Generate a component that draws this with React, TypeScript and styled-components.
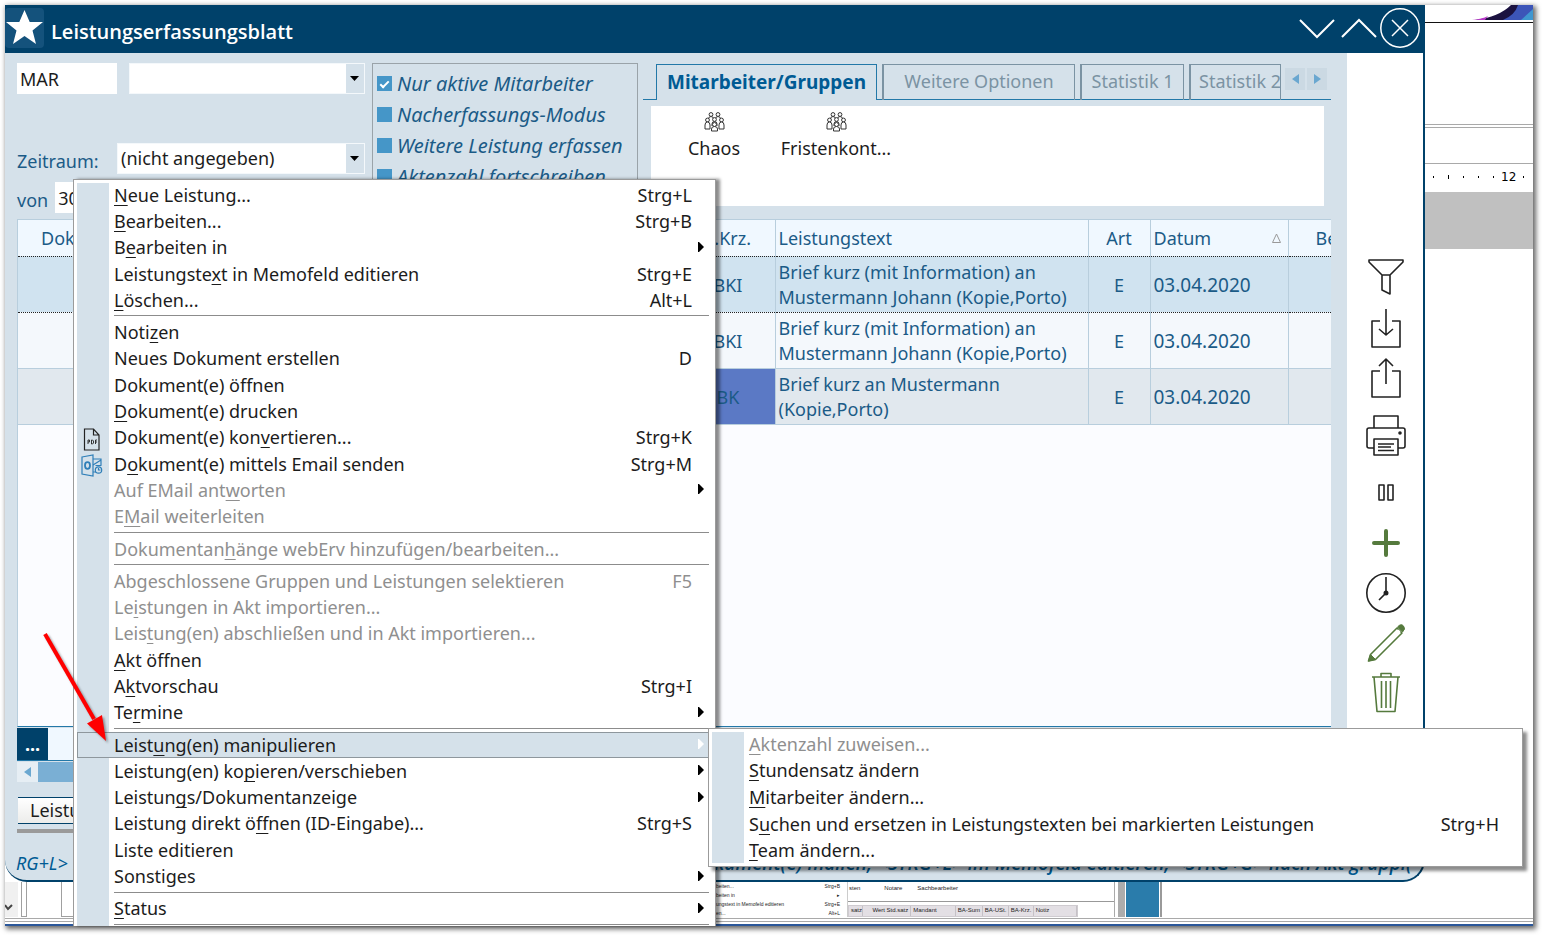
import React from "react";
import styled, { createGlobalStyle, css } from "styled-components";

const color = {
  navy: "#00416a",
  tile: "#14527c",
  panel: "#d5e1ea",
  text: "#1b5b87",
  strong: "#005b94",
  line: "#b8cedd",
  tabLine: "#2378a8",
  mutedTab: "#7b93a3",
  box: "#4596c8",
  ink: "#1c1c1c",
  disabled: "#8f8f8f",
  green: "#557a3d",
};

const Global = createGlobalStyle`
  *, *::before, *::after { box-sizing: border-box; }
  body {
    margin: 0;
    background: #fff;
    font-family: "Noto Sans", "Open Sans", sans-serif;
    font-size: 18px;
    line-height: 25px;
    color: ${color.text};
    overflow: hidden;
  }
  button, input, select { font: inherit; color: inherit; margin: 0; padding: 0; border: 0; background: none; border-radius: 0; }
`;

const Desktop = styled.div`
  position: relative;
  display: flex;
  flex-direction: column;
  margin: 5px 9px 9px 5px;
  min-height: calc(100vh - 14px);
  background: #fff;
  border-bottom: 2px solid #2b579a;
  box-shadow: 2px 2px 5px 1px rgba(0, 0, 0, 0.6);
`;

const Upper = styled.div`
  flex: 1;
  display: flex;
`;

/* ---------- application window ---------- */

const AppWindow = styled.section`
  flex: 1;
  min-width: 0;
  display: flex;
  flex-direction: column;
  background: ${color.panel};
  border-right: 2px solid ${color.navy};
  border-bottom: 2px solid ${color.navy};
  border-radius: 0 0 22px 22px;
  overflow: hidden;
`;

const TitleBar = styled.header`
  display: flex;
  align-items: center;
  height: 48px;
  padding-right: 2px;
  background: ${color.navy};
  color: #fff;
`;

const AppIcon = styled.div`
  width: 39px;
  height: 40px;
  margin-bottom: 2px;
  border-radius: 4px;
  background: ${color.tile};
`;

const Title = styled.h1`
  flex: 1;
  margin: 6px 0 0 7px;
  font-family: "Open Sans", sans-serif;
  font-size: 20px;
  line-height: 26px;
  font-weight: 600;
`;

const WindowButton = styled.button`
  display: flex;
  width: 42px;
  height: 42px;
  margin-bottom: 2px;
`;

const WindowBody = styled.div`
  flex: 1;
  display: flex;
  min-height: 0;
`;

const Main = styled.main`
  flex: 1;
  min-width: 0;
  display: flex;
  flex-direction: column;
  padding: 10px 16px 11px 12px;
`;

const FilterArea = styled.div`
  display: flex;
  height: 150px;
  margin-bottom: 6px;
`;

const Form = styled.form`
  display: flex;
  flex-direction: column;
  width: 348px;
  margin-right: 7px;
`;

const FormRow = styled.div<{ $before?: number; $gap?: number }>`
  display: flex;
  align-items: center;
  gap: ${(p) => p.$gap ?? 12}px;
  margin-top: ${(p) => p.$before ?? 0}px;
`;

const Label = styled.label<{ $width?: number }>`
  width: ${(p) => (p.$width ? `${p.$width}px` : "auto")};
  padding-top: 6px;
`;

const TextBox = styled.input`
  width: 100px;
  height: 31px;
  padding: 0 3px;
  background: #fff;
  color: ${color.ink};
`;

const SelectBox = styled.div`
  flex: 1;
  display: grid;
  grid-template-columns: 1fr 20px;
  height: 31px;
  border: 1px solid #f4f8fb;
  background: linear-gradient(${color.panel}, ${color.panel}) right / 18px 100% no-repeat #fff;

  select {
    grid-area: 1 / 1 / 2 / 3;
    appearance: none;
    padding: 0 3px;
    color: ${color.ink};
    outline: none;
  }
  svg {
    grid-area: 1 / 2;
    align-self: center;
    justify-self: center;
    pointer-events: none;
  }
`;

const Options = styled.fieldset`
  width: 266px;
  min-width: 0;
  margin: 0 5px 0 0;
  padding: 4px;
  border: 1px solid #9aa3a9;
  font-size: 20px;
  font-style: italic;
`;

const Option = styled.label`
  display: flex;
  align-items: center;
  gap: 5px;
  height: 31px;
  white-space: nowrap;
`;

const Check = styled.input`
  appearance: none;
  width: 15px;
  height: 15px;
  background: ${color.box};

  &:checked {
    display: grid;
    place-items: center;
  }
  &:checked::before {
    content: "";
    width: 9px;
    height: 5px;
    border: solid #fff;
    border-width: 0 0 2px 2px;
    transform: rotate(-45deg);
  }
`;

const TabArea = styled.div`
  flex: 1;
  min-width: 0;
`;

const TabStrip = styled.div`
  display: flex;
  height: 37px;
  padding-top: 1px;
  background: linear-gradient(${color.tabLine}, ${color.tabLine}) bottom / 100% 1px no-repeat;
`;

const Tab = styled.button<{ $active?: boolean; $cut?: boolean }>`
  flex: none;
  width: 104px;
  padding: 0 8px 2px;
  margin-right: 5px;
  white-space: nowrap;
  border: 2px solid ${color.mutedTab};
  border-bottom: 0;
  border-width: 1px 1px 0 2px;
  color: ${color.mutedTab};
  background: linear-gradient(${color.tabLine}, ${color.tabLine}) bottom / 100% 1px no-repeat ${color.panel};

  ${(p) =>
    p.$active &&
    css`
      width: 221px;
      margin-left: 13px;
      padding-bottom: 0;
      border: 1px solid ${color.tabLine};
      border-bottom: 0;
      background: ${color.panel};
      color: ${color.strong};
      font-size: 19px;
      font-weight: 700;
    `}
  ${(p) =>
    p.$cut &&
    css`
      width: 92px;
      margin-right: 4px;
      padding-right: 0;
      text-align: left;
      overflow: hidden;
    `}
`;

const WideTab = styled(Tab)`
  width: 193px;
`;

const ScrollTab = styled.button`
  display: flex;
  align-items: center;
  justify-content: center;
  width: 20px;
  height: 22px;
  margin: 4px 2px 0 0;
  background: #cbd9e3;
`;

const GroupPanel = styled.div`
  display: flex;
  gap: 2px;
  height: 100px;
  margin: 6px 7px 0 8px;
  padding: 6px 3px;
  background: #fff;
`;

const GroupTile = styled.button`
  display: flex;
  flex-direction: column;
  align-items: center;
  gap: 4px;
  width: 120px;
  color: ${color.ink};
`;

/* ---------- table ---------- */

const GridArea = styled.div`
  flex: 1;
  overflow: hidden;
  border: 1px solid ${color.line};
  border-right: 0;
  border-bottom: 1px solid ${color.tabLine};
  background: #fbfcff;
`;

const DataTable = styled.table`
  width: 100%;
  table-layout: fixed;
  border-collapse: collapse;
`;

const Th = styled.th<{ $align?: string; $indent?: number }>`
  height: 36px;
  padding: 1px 3px 0 ${(p) => p.$indent ?? 3}px;
  font-weight: 400;
  text-align: ${(p) => p.$align ?? "left"};
  white-space: nowrap;
  overflow: hidden;
  background: #f0f8ff;
  border-right: 1px solid ${color.line};

  &:last-child { border-right: 0; }
`;

const SortHead = styled.span`
  display: flex;
  align-items: center;
  justify-content: space-between;
  padding-right: 4px;
`;

const Td = styled.td<{ $align?: string; $marked?: boolean; $digits?: boolean }>`
  height: 56px;
  padding: 2px 3px 0;
  font-size: ${(p) => (p.$digits ? 19 : 18)}px;
  text-align: ${(p) => p.$align ?? "left"};
  border-right: 1px solid ${color.line};
  ${(p) => p.$marked && css`background: #5b79c5;`}

  &:last-child { border-right: 0; }
`;

const rowTone = { selected: "#d0e3f0", light: "#f4f8fc", dark: "#e1e8ee" };

const Tr = styled.tr<{ $tone: keyof typeof rowTone }>`
  background: ${(p) => rowTone[p.$tone]};
  border-bottom: 1px solid ${color.line};
  ${(p) =>
    p.$tone === "selected" &&
    css`
      border-top: 1px dotted #222;
      border-bottom: 1px dotted #222;
    `}
`;

const SumRow = styled.div`
  display: flex;
  height: 33px;
  margin: 1px 0;
  background: #f0f8ff;
  border-bottom: 1px solid ${color.tabLine};
`;

const MoreButton = styled.button`
  width: 31px;
  background: ${color.navy};
  color: #fff;
  font-weight: 700;
`;

const ScrollTrack = styled.div`
  display: flex;
  height: 20px;
  background: #e6eef4;
`;

const ScrollArrow = styled.button`
  display: flex;
  align-items: center;
  justify-content: center;
  width: 21px;
`;

const ScrollThumb = styled.div`
  width: 70%;
  background: #7aafd4;
`;

const ListButton = styled.button`
  align-self: flex-start;
  width: 160px;
  height: 27px;
  margin: 15px 0 5px 1px;
  padding-left: 12px;
  text-align: left;
  color: ${color.ink};
  background: linear-gradient(#fff, #ececea);
  border: solid ${color.navy};
  border-width: 1px 0;
`;

const Divider = styled.div`
  height: 4px;
  background: #9a9a9a;
`;

const HintLine = styled.footer`
  display: flex;
  justify-content: space-between;
  height: 36px;
  padding: 7px 11px 0;
  font-style: italic;
  color: ${color.strong};
  white-space: nowrap;
`;

const Hint = styled.span<{ $strong?: boolean }>`
  ${(p) =>
    p.$strong &&
    css`
      font-family: "Open Sans", sans-serif;
      font-size: 19px;
      font-weight: 600;
    `}
`;

/* ---------- tool bar at the right ---------- */

const ToolBar = styled.aside`
  display: flex;
  flex-direction: column;
  gap: 17px;
  width: 76px;
  padding: 205px 17px 0 19px;
  background: #fff;
`;

const ToolGroup = styled.div`
  display: flex;
  flex-direction: column;
  gap: 10px;
`;

const ToolButton = styled.button`
  display: flex;
  width: 40px;
  height: 40px;

  svg { overflow: visible; }
`;

/* ---------- document window behind, right ---------- */

const DocColumn = styled.div`
  display: flex;
  flex-direction: column;
  width: 108px;
`;

const DocPicture = styled.div`
  height: 18px;
  border-bottom: 1px solid #111;
  svg { display: block; margin-left: auto; }
`;

const DocBlock = styled.div<{ $height: number; $line?: boolean; $fill?: string }>`
  height: ${(p) => p.$height}px;
  background: ${(p) => p.$fill ?? "#fff"};
  border-bottom: ${(p) => (p.$line ? "1px solid #a9a9a9" : "0")};
`;

const Ruler = styled.div`
  display: flex;
  align-items: center;
  gap: 14px;
  height: 28px;
  padding: 0 8px 3px;
  font-family: "DejaVu Sans", sans-serif;
  font-size: 12px;
  line-height: 14px;
  color: #000;
`;

const Tick = styled.i<{ $tall?: boolean }>`
  width: 1px;
  height: ${(p) => (p.$tall ? 4 : 2)}px;
  background: #000;
`;

const RulerNumber = styled.span`
  margin: 0 -7px;
`;

/* ---------- strip of windows behind, bottom ---------- */

const LowerStrip = styled.div`
  display: flex;
  height: 42px;
  padding-bottom: 7px;
  overflow: hidden;
  font-family: "Liberation Sans", sans-serif;
  font-size: 6px;
  line-height: 9px;
  color: #222;
  background: linear-gradient(#a9a9a9, #a9a9a9) 0 36px / 100% 1px no-repeat,
    linear-gradient(#a9a9a9, #a9a9a9) 0 39px / 100% 1px no-repeat;
`;

const StripCorner = styled.div`
  display: flex;
  width: 711px;
`;

const StripScroll = styled.div`
  display: flex;
  align-items: flex-end;
  width: 13px;
  background: #f0f0f0;
  padding-bottom: 6px;
`;

const StripPage = styled.div<{ $width: number; $before: number }>`
  width: ${(p) => p.$width}px;
  margin-left: ${(p) => p.$before}px;
  border: solid #a0a0a0;
  border-width: 0 1px 1px 1px;
`;

const MiniMenu = styled.div`
  width: 132px;
  padding-right: 7px;
  border-right: 1px solid #ccc;
  font-size: 5px;
`;

const MiniRow = styled.div`
  display: flex;
  justify-content: space-between;
  white-space: nowrap;
`;

const MiniPanel = styled.div`
  display: flex;
  flex-direction: column;
  justify-content: space-between;
  width: 267px;
  border-right: 1px solid #aaa;
`;

const MiniTabs = styled.div`
  display: flex;
  gap: 24px;
  height: 20px;
  padding: 2px 0 0 1px;
  border-bottom: 1px solid #999;

  span + span + span { margin-left: -9px; }
`;

const MiniHead = styled.div`
  display: flex;
  width: 230px;
  height: 12px;
  background: #e3dfe4;
  border: 1px solid #cfcbd0;
`;

const MiniCell = styled.span<{ $width: number; $right?: boolean }>`
  width: ${(p) => p.$width}px;
  padding: 0 2px;
  text-align: ${(p) => (p.$right ? "right" : "left")};
  border-right: 1px solid #c5c1c6;
  white-space: nowrap;
`;

const StripBlock = styled.div<{ $width: number; $fill: string; $before?: number }>`
  width: ${(p) => p.$width}px;
  margin-left: ${(p) => p.$before ?? 0}px;
  background: ${(p) => p.$fill};
`;

/* ---------- menus ---------- */

const Menu = styled.div`
  position: absolute;
  display: flex;
  flex-direction: column;
  padding: 2px 3px;
  border: 1px solid #9b9b9b;
  color: ${color.ink};
  background: linear-gradient(${color.panel}, ${color.panel}) 3px 3px / 32px 100% no-repeat #fff;
  box-shadow: 4px 4px 3px rgba(0, 0, 0, 0.45);
`;

const ContextMenu = styled(Menu)`
  top: 174px;
  bottom: -2px;
  left: 68px;
  width: 643px;
  border-bottom: 0;
  padding-bottom: 0;
  box-shadow: 4px 0 3px rgba(0, 0, 0, 0.45);
`;

const SubMenu = styled(Menu)`
  top: 723px;
  left: 703px;
  width: 815px;
  height: 139px;
  background-size: 32px calc(100% - 6px);
`;

const Item = styled.button<{ $active?: boolean }>`
  flex: 1;
  display: flex;
  align-items: center;
  padding-left: 37px;
  text-align: left;
  white-space: nowrap;
  ${(p) =>
    p.$active &&
    css`
      background: ${color.panel};
      box-shadow: inset 0 0 0 1px #8e979d;
    `}

  &:disabled { color: ${color.disabled}; }
  u {
    text-decoration-thickness: 1px;
    text-underline-offset: 3px;
    text-decoration-skip-ink: none;
  }
`;

const Shortcut = styled.span`
  margin-left: auto;
  padding-right: 20px;
`;

const SubArrow = styled.svg<{ $active?: boolean }>`
  margin: 0 8px 2px auto;
  fill: ${(p) => (p.$active ? "#fff" : "#000")};
`;

const Separator = styled.hr`
  flex: none;
  height: 6px;
  width: calc(100% - 40px);
  margin: 0 3px 0 37px;
  border: 0;
  background: linear-gradient(#8c8c8c, #8c8c8c) 0 2px / 100% 1px no-repeat;

  &:last-child { height: 4px; }
`;

const Pointer = styled.svg`
  position: absolute;
  left: 35px;
  top: 624px;
  filter: drop-shadow(2px 2px 1px rgba(0, 0, 0, 0.35));
  pointer-events: none;
`;

const ItemIcon = styled.svg`
  flex: none;
  margin: 2px 9px 0 -34px;
`;

type Entry =
  | { sep: true }
  | { sep?: false; text: string; keys?: string; sub?: boolean; off?: boolean; active?: boolean; icon?: "pdf" | "mail" };

/* An underscore stands before the letter that is the access key. */
const entries: Entry[] = [
  { text: "_Neue Leistung...", keys: "Strg+L" },
  { text: "_Bearbeiten...", keys: "Strg+B" },
  { text: "B_earbeiten in", sub: true },
  { text: "Leistungste_xt in Memofeld editieren", keys: "Strg+E" },
  { text: "_Löschen...", keys: "Alt+L" },
  { sep: true },
  { text: "Noti_zen" },
  { text: "Neues Dokument erstellen", keys: "D" },
  { text: "Dokument(e) öffnen" },
  { text: "_Dokument(e) drucken" },
  { text: "Dokument(e) kon_vertieren...", keys: "Strg+K", icon: "pdf" },
  { text: "D_okument(e) mittels Email senden", keys: "Strg+M", icon: "mail" },
  { text: "Auf EMail ant_worten", sub: true, off: true },
  { text: "E_Mail weiterleiten", off: true },
  { sep: true },
  { text: "Dokumentan_hänge webErv hinzufügen/bearbeiten...", off: true },
  { sep: true },
  { text: "Abgeschlossene Gruppen und Leistungen selektieren", keys: "F5", off: true },
  { text: "Le_istungen in Akt importieren...", off: true },
  { text: "Leis_tung(en) abschließen und in Akt importieren...", off: true },
  { text: "_Akt öffnen" },
  { text: "A_ktvorschau", keys: "Strg+I" },
  { text: "Te_rmine", sub: true },
  { sep: true },
  { text: "Leist_ung(en) manipulieren", sub: true, active: true },
  { text: "Leistung(en) ko_pieren/verschieben", sub: true },
  { text: "Leistun_gs/Dokumentanzeige", sub: true },
  { text: "Leistung direkt ö_ffnen (ID-Eingabe)...", keys: "Strg+S" },
  { text: "Liste editieren" },
  { text: "Sonstiges", sub: true },
  { sep: true },
  { text: "_Status", sub: true },
  { sep: true },
];

const subEntries: Entry[] = [
  { text: "_Aktenzahl zuweisen...", off: true },
  { text: "_Stundensatz ändern" },
  { text: "_Mitarbeiter ändern..." },
  { text: "S_uchen und ersetzen in Leistungstexten bei markierten Leistungen", keys: "Strg+H" },
  { text: "_Team ändern..." },
];

function Mnemonic({ text }: { text: string }) {
  const i = text.indexOf("_");
  if (i < 0) return <span>{text}</span>;
  return (
    <span>
      {text.slice(0, i)}
      <u>{text[i + 1]}</u>
      {text.slice(i + 2)}
    </span>
  );
}

function EntryIcon({ kind }: { kind: "pdf" | "mail" }) {
  if (kind === "pdf")
    return (
      <ItemIcon width="25" height="24" viewBox="0 0 25 24" fill="none" stroke="#222" strokeWidth="1.2">
        <path d="M4.500 2h9l5.500 6v15H4.500zM13.500 2v6H19" />
        <path d="M8 17v-4h1.500v2H8M11.500 13v4h1l1-1v-2l-1-1zM15.500 17v-4H17M15.500 15H17" strokeWidth="0.900" />
      </ItemIcon>
    );
  return (
    <ItemIcon width="25" height="24" viewBox="0 0 25 24" fill="none" stroke="#2f7fb8" strokeWidth="1.200">
      <path d="M2 4l11-2v21L2 21z" />
      <ellipse cx="7.500" cy="12.500" rx="2.500" ry="3.300" strokeWidth="1.800" />
      <path d="M13 6h8v6M13 12l8-5M13 19h3" />
      <circle cx="18.500" cy="17" r="3.200" />
      <path d="M18.500 15v2h2M15.500 12.500h6" />
    </ItemIcon>
  );
}

function Entries({ list }: { list: Entry[] }) {
  return (
    <>
      {list.map((e, i) =>
        e.sep ? (
          <Separator key={i} />
        ) : (
          <Item key={i} type="button" role="menuitem" disabled={e.off} $active={e.active}>
            {e.icon && <EntryIcon kind={e.icon} />}
            <Mnemonic text={e.text} />
            {e.keys && <Shortcut>{e.keys}</Shortcut>}
            {e.sub && (
              <SubArrow $active={e.active} width="6" height="10" viewBox="0 0 6 10">
                <path d="M0 0h1l5 5-5 5H0z" />
              </SubArrow>
            )}
          </Item>
        )
      )}
    </>
  );
}

const rows = [
  { tone: "selected", code: "BKI", text: ["Brief kurz (mit Information) an", "Mustermann Johann (Kopie,Porto)"] },
  { tone: "light", code: "BKI", text: ["Brief kurz (mit Information) an", "Mustermann Johann (Kopie,Porto)"] },
  { tone: "dark", code: "BK", text: ["Brief kurz an Mustermann", "(Kopie,Porto)"] },
] as const;

const DropArrow = () => (
  <svg width="9" height="5" viewBox="0 0 9 5">
    <path d="M0 0h9L4.500 5z" fill="#000" />
  </svg>
);

const Triangle = ({ left }: { left?: boolean }) => (
  <svg width="7" height="10" viewBox="0 0 7 10">
    <path d={left ? "M7 0L0 5l7 5z" : "M0 0l7 5-7 5z"} fill="#6aa7d0" />
  </svg>
);

const People = () => (
  <svg width="21" height="20" viewBox="0 0 21 20" fill="#fff" stroke="#333" strokeWidth="1">
    <circle cx="7" cy="2.500" r="1.900" />
    <circle cx="14" cy="2.500" r="1.900" />
    <path d="M4.500 9V7q0-2.500 2.500-2.500T9.500 7v2M11.500 9V7q0-2.500 2.500-2.500T16.500 7v2" />
    <circle cx="3.500" cy="8" r="1.900" />
    <circle cx="17.500" cy="8" r="1.900" />
    <circle cx="10.500" cy="7.500" r="1.900" />
    <path d="M1 17v-4q0-3 2.500-3T6 13v4zM15 17v-4q0-3 2.500-3t2.500 3v4zM8 14v-2q0-2.500 2.500-2.500T13 12v2" />
    <circle cx="10.500" cy="12.500" r="2" />
    <path d="M7.500 19v-2q0-2.500 3-2.500t3 2.500v2z" />
  </svg>
);

const Tool = ({ label, stroke = "#222", children }: { label: string; stroke?: string; children: React.ReactNode }) => (
  <ToolButton type="button" aria-label={label}>
    <svg width="40" height="40" viewBox="0 0 40 40" fill="none" stroke={stroke} strokeWidth="1.600" strokeLinejoin="round">
      {children}
    </svg>
  </ToolButton>
);

export default function App() {
  return (
    <>
      <Global />
      <Desktop>
        <Upper>
          <AppWindow>
            <TitleBar>
              <AppIcon>
                <svg width="39" height="40" viewBox="0 0 39 40">
                  <path d="M19.500 2l5.200 12H38L27.500 22.500 31 36l-11.500-8L8 36l3.500-13.500L1 14h13.300z" fill="#fff" />
                </svg>
              </AppIcon>
              <Title>Leistungserfassungsblatt</Title>
              <WindowButton type="button" aria-label="Minimieren">
                <svg width="42" height="42" fill="none" stroke="#fff" strokeWidth="2">
                  <path d="M5 13l17 17 17-17" />
                </svg>
              </WindowButton>
              <WindowButton type="button" aria-label="Maximieren">
                <svg width="42" height="42" fill="none" stroke="#fff" strokeWidth="2">
                  <path d="M5 30l17-17 17 17" />
                </svg>
              </WindowButton>
              <WindowButton type="button" aria-label="Schließen">
                <svg width="42" height="42" fill="none" stroke="#fff" strokeWidth="1.500">
                  <circle cx="21" cy="21" r="19.200" />
                  <path d="M13 13l16 16M29 13L13 29" />
                </svg>
              </WindowButton>
            </TitleBar>

            <WindowBody>
              <Main>
                <FilterArea>
                  <Form>
                    <FormRow>
                      <TextBox aria-label="Kürzel" defaultValue="MAR" />
                      <SelectBox>
                        <select aria-label="Mitarbeiter">
                          <option></option>
                        </select>
                        <DropArrow />
                      </SelectBox>
                    </FormRow>
                    <FormRow $before={49} $gap={0}>
                      <Label htmlFor="period" $width={100}>Zeitraum:</Label>
                      <SelectBox>
                        <select id="period">
                          <option>(nicht angegeben)</option>
                        </select>
                        <DropArrow />
                      </SelectBox>
                    </FormRow>
                    <FormRow $before={8} $gap={7}>
                      <Label htmlFor="from">von</Label>
                      <TextBox id="from" defaultValue="30.03." />
                    </FormRow>
                  </Form>
                  <Options>
                    <Option><Check type="checkbox" defaultChecked /> Nur aktive Mitarbeiter</Option>
                    <Option><Check type="checkbox" /> Nacherfassungs-Modus</Option>
                    <Option><Check type="checkbox" /> Weitere Leistung erfassen</Option>
                    <Option><Check type="checkbox" /> Aktenzahl fortschreiben</Option>
                  </Options>
                  <TabArea>
                    <TabStrip>
                      <Tab type="button" $active>Mitarbeiter/Gruppen</Tab>
                      <WideTab type="button">Weitere Optionen</WideTab>
                      <Tab type="button">Statistik 1</Tab>
                      <Tab type="button" $cut>Statistik 2</Tab>
                      <ScrollTab type="button" aria-label="Zurück"><Triangle left /></ScrollTab>
                      <ScrollTab type="button" aria-label="Weiter"><Triangle /></ScrollTab>
                    </TabStrip>
                    <GroupPanel>
                      <GroupTile type="button"><People />Chaos</GroupTile>
                      <GroupTile type="button"><People />Fristenkont...</GroupTile>
                    </GroupPanel>
                  </TabArea>
                </FilterArea>

                <GridArea>
                  <DataTable>
                    <colgroup>
                      <col style={{ width: 100 }} />
                      <col />
                      <col style={{ width: 94 }} />
                      <col style={{ width: 313 }} />
                      <col style={{ width: 62 }} />
                      <col style={{ width: 138 }} />
                      <col style={{ width: 43 }} />
                    </colgroup>
                    <thead>
                      <tr>
                        <Th $indent={23}>Dok.</Th>
                        <Th />
                        <Th $align="center">L.Krz.</Th>
                        <Th>Leistungstext</Th>
                        <Th $align="center">Art</Th>
                        <Th>
                          <SortHead>
                            Datum
                            <svg width="9" height="10" viewBox="0 0 9 10" fill="none" stroke="#999">
                              <path d="M4.500 1L8.500 9.500h-8z" />
                            </svg>
                          </SortHead>
                        </Th>
                        <Th $indent={27}>Be</Th>
                      </tr>
                    </thead>
                    <tbody>
                      {rows.map((r, i) => (
                        <Tr key={i} $tone={r.tone}>
                          <Td />
                          <Td />
                          <Td $align="center" $marked={r.code === "BK"}>{r.code}</Td>
                          <Td>{r.text[0]}<br />{r.text[1]}</Td>
                          <Td $align="center">E</Td>
                          <Td $digits>03.04.2020</Td>
                          <Td />
                        </Tr>
                      ))}
                    </tbody>
                  </DataTable>
                </GridArea>
                <SumRow><MoreButton type="button">...</MoreButton></SumRow>
                <ScrollTrack>
                  <ScrollArrow type="button" aria-label="Nach links"><Triangle left /></ScrollArrow>
                  <ScrollThumb />
                </ScrollTrack>
                <ListButton type="button">Leistung</ListButton>
                <Divider />
              </Main>

              <ToolBar>
                <ToolGroup>
                  <Tool label="Filter">
                    <path d="M3 2h34v2L24 17H16L3 4zM16 17v15l8 4V17z" />
                  </Tool>
                  <Tool label="Importieren">
                    <path d="M14 13H6v26h28V13h-8M20 1v26M13 21l7 6 7-6" />
                  </Tool>
                  <Tool label="Exportieren">
                    <path d="M14 13H6v26h28V13h-8M20 26V1M13 8l7-7 7 7" />
                  </Tool>
                </ToolGroup>
                <ToolGroup>
                  <Tool label="Drucken">
                    <path d="M8 13V1h24v12M8 33H3q-2 0-2-2V15q0-2 2-2h34q2 0 2 2v16q0 2-2 2h-5M8 24h24v16H8zM12 29h16M12 32h13M12 35.500h16" />
                    <circle cx="34" cy="18" r="1" fill="#222" />
                  </Tool>
                </ToolGroup>
                <ToolGroup>
                  <Tool label="Pause">
                    <path d="M13 13h5v15h-5zM22 13h5v15h-5z" />
                  </Tool>
                  <Tool label="Neu" stroke={color.green}>
                    <path d="M20 9v24M8 21h24" strokeWidth="4" strokeLinecap="round" />
                  </Tool>
                  <Tool label="Uhr">
                    <circle cx="20" cy="21" r="19.200" />
                    <path d="M20 5v16l-7 7" />
                    <circle cx="20" cy="21" r="1.700" fill="#222" />
                  </Tool>
                  <Tool label="Bearbeiten" stroke={color.green}>
                    <path d="M4.500 32.500L31 6l5 5L9.500 37.500 2.500 39z" />
                    <path d="M7.500 34.500L33.500 8.500" stroke="#fff" strokeWidth="3" />
                    <path d="M2.500 39l2-6.500 5 5zM31.500 5q3.500-4 6-1t-1 6z" fill={color.green} strokeWidth="1" />
                  </Tool>
                  <Tool label="Löschen" stroke={color.green}>
                    <path d="M6 5h28M15 5V1.500h10V5M8 5l3 34.500h18L32 5M15.500 9v27M20 9v27M24.500 9v27" />
                  </Tool>
                </ToolGroup>
              </ToolBar>
            </WindowBody>
            <HintLine>
              <Hint>RG+L&gt; Leistung</Hint>
              <Hint $strong>Dokument(e) mailen, &lt;STRG+L&gt; im Memofeld editieren, &lt;STRG+G&gt; nach Akt gruppi(</Hint>
            </HintLine>
          </AppWindow>

          <DocColumn>
            <DocPicture>
              <svg width="62" height="16" viewBox="0 0 62 16">
                <path d="M4 15Q28 12 40 0h22v15z" fill="#1b1240" />
                <path d="M32 15Q44 10 47 0h15v15z" fill="#3c55b8" />
                <path d="M50 15L62 4v11z" fill="#3f97d0" />
                <path d="M1 15q10-1 16-4l-3 4z" fill="#b838c8" />
              </svg>
            </DocPicture>
            <DocBlock $height={102} $line />
            <DocBlock $height={3} $line />
            <DocBlock $height={36} $line />
            <Ruler>
              <Tick /><Tick $tall /><Tick /><Tick /><Tick />
              <RulerNumber>12</RulerNumber>
              <Tick />
            </Ruler>
            <DocBlock $height={57} $fill="#c0c0c0" />
          </DocColumn>
        </Upper>

        <LowerStrip>
          <StripCorner>
            <StripScroll>
              <svg width="8" height="7" fill="none" stroke="#444" strokeWidth="2"><path d="M0 1l3 4 4-4" /></svg>
            </StripScroll>
            <StripPage $width={6} $before={3} />
            <StripPage $width={500} $before={34} />
          </StripCorner>
          <MiniMenu>
            <MiniRow><span>beiten...</span><span>Strg+B</span></MiniRow>
            <MiniRow><span>beiten in</span><span>▸</span></MiniRow>
            <MiniRow><span>ungstext in Memofeld editieren</span><span>Strg+E</span></MiniRow>
            <MiniRow><span>en...</span><span>Alt+L</span></MiniRow>
          </MiniMenu>
          <MiniPanel>
            <MiniTabs><span>sten</span><span>Notare</span><span>Sachbearbeiter</span></MiniTabs>
            <MiniHead>
              <MiniCell $width={14}>satz</MiniCell>
              <MiniCell $width={49} $right>Wert Std.satz</MiniCell>
              <MiniCell $width={45}>Mandant</MiniCell>
              <MiniCell $width={27}>BA-Sum</MiniCell>
              <MiniCell $width={26}>BA-USt.</MiniCell>
              <MiniCell $width={25}>BA-Krz.</MiniCell>
              <MiniCell $width={44}>Notiz</MiniCell>
            </MiniHead>
          </MiniPanel>
          <StripBlock $width={7} $fill="#acacac" $before={3} />
          <StripBlock $width={33} $fill="#2a7cab" $before={1} />
          <StripBlock $width={2} $fill="#9a9a9a" $before={1} />
        </LowerStrip>

        <ContextMenu role="menu">
          <Entries list={entries} />
        </ContextMenu>
        <SubMenu role="menu">
          <Entries list={subEntries} />
        </SubMenu>
        <Pointer width="80" height="130" viewBox="0 0 80 130">
          <path d="M5 5L54 90" stroke="#f00" strokeWidth="4" fill="none" />
          <path d="M66 112L47 94.500 62 86z" fill="#f00" />
        </Pointer>
      </Desktop>
    </>
  );
}
